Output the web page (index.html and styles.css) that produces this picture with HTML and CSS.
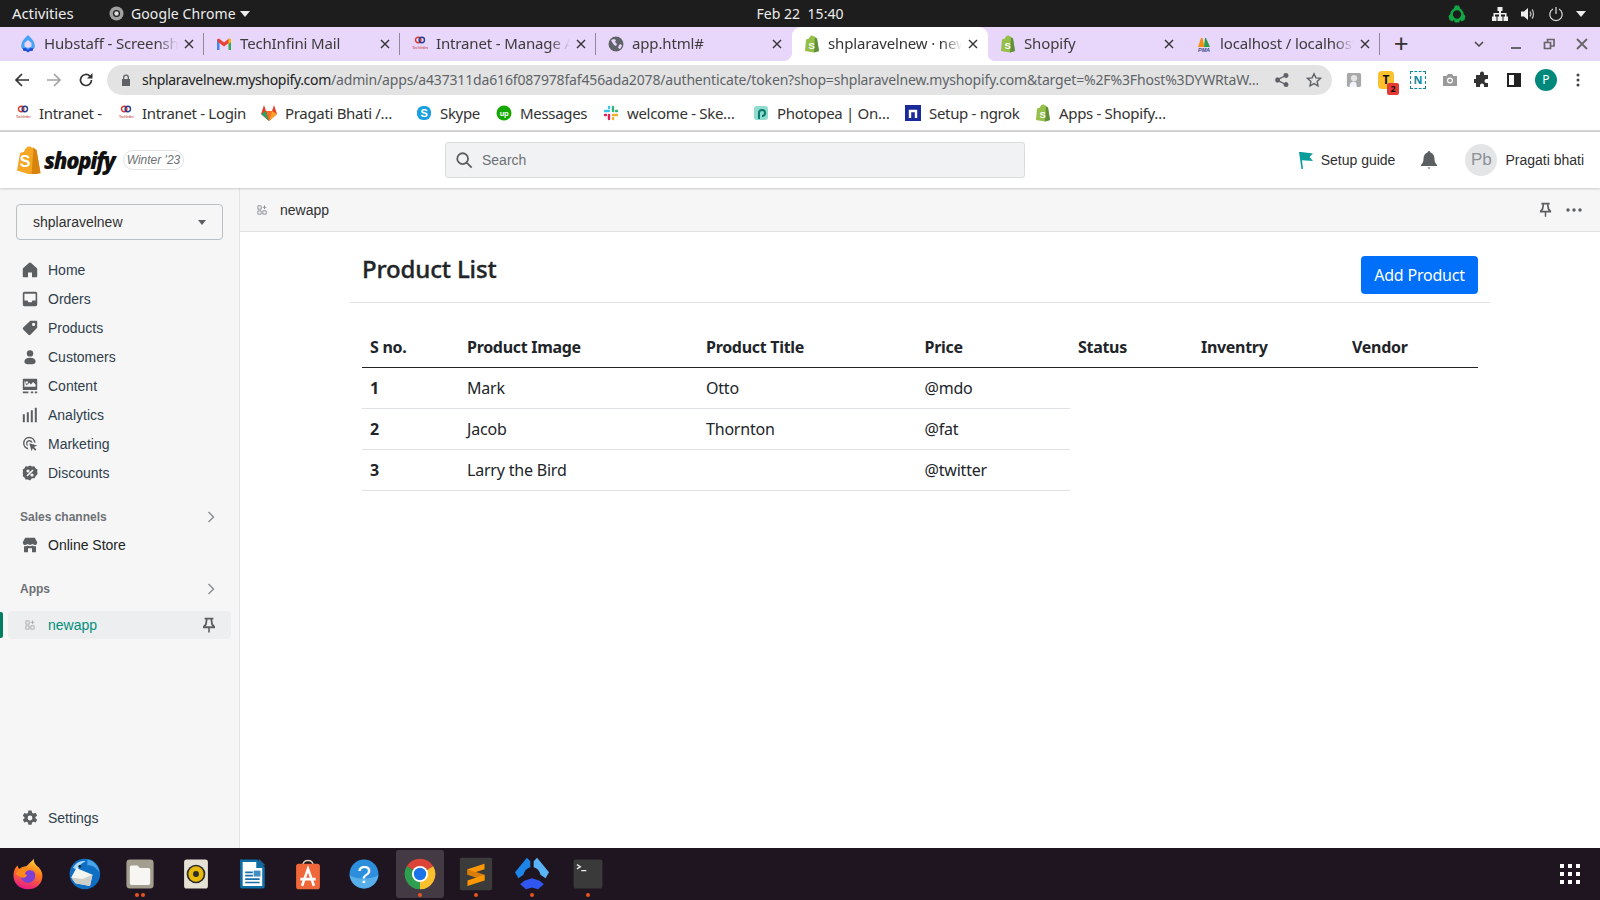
FILE: index.html
```html
<!DOCTYPE html>
<html lang="en">
<head>
<meta charset="utf-8">
<title>shplaravelnew · newapp · Shopify</title>
<link rel="stylesheet" href="styles.css">
</head>
<body>
<svg class="defs" width="0" height="0" aria-hidden="true">
  <defs>
    <linearGradient id="fx" x1="0.7" y1="0" x2="0.4" y2="1">
      <stop offset="0" stop-color="#ffd43a"/>
      <stop offset=".45" stop-color="#ff7a1a"/>
      <stop offset="1" stop-color="#e8178a"/>
    </linearGradient>
  </defs>
  <symbol id="bag" viewBox="0 0 16 18">
    <path fill="#95bf47" d="M2 4.500 5 3.400C5.600 1.600 6.800.5 8 .5c.8 0 1.200.5 1.500 1l1-.3 1 1.300L13 3.500 15 16l-5 1.500L1 16z"/>
    <path fill="#5e8e3e" d="M11 2.500 13 3.500 15 16l-5 1.500z"/>
    <text x="7.500" y="13.500" font-family="Liberation Sans" font-weight="700" font-size="9.500" fill="#fff" text-anchor="middle">S</text>
  </symbol>
  <symbol id="intra" viewBox="0 0 16 18">
    <circle cx="6.200" cy="5" r="2.700" fill="none" stroke="#d8342c" stroke-width="1.400"/>
    <circle cx="9.800" cy="5" r="2.700" fill="none" stroke="#23408e" stroke-width="1.400"/>
    <text x="8" y="14" font-family="Liberation Sans" font-size="4.200" fill="#c8423c" text-anchor="middle">TechInfini</text>
  </symbol>
  <symbol id="pin" viewBox="0 0 20 20">
    <path fill="#5c5f62" d="M4.500 1h11v2.200H14l1 5.600 2.500 2.700V14H11v5.500H9V14H2.500v-2.500L5 8.800l1-5.600H4.500zM8.200 3.200l-1 6.500-1.300 1.800h8.200l-1.300-1.800-1-6.500z"/>
  </symbol>
  <symbol id="appgrid" viewBox="0 0 12 12">
    <path fill="none" stroke="#8c9196" stroke-width="1.100" d="M1 1h4v4H1zM1 7h4v4H1zM7 7h4v4H7zM9 .5v4.500M6.800 2.800h4.400"/>
  </symbol>
  <symbol id="chev" viewBox="0 0 10 14">
    <path fill="none" stroke="#8c9196" stroke-width="1.500" d="M2.500 2 7.500 7l-5 5"/>
  </symbol>
  <symbol id="closex" viewBox="0 0 10 10">
    <path fill="none" stroke="#333" stroke-width="1.400" d="m1 1 8 8M9 1 1 9"/>
  </symbol>
</svg>

<header class="system-bar">
  <div class="sys-left">
    <span class="sys-activities">Activities</span>
    <span class="sys-app">
      <svg class="sys-chrome" viewBox="0 0 16 16"><circle cx="8" cy="8" r="7.500" fill="#a0a0a0"/><circle cx="8" cy="8" r="3.800" fill="#1d1d1d"/><circle cx="8" cy="8" r="2.400" fill="#ddd"/></svg>
      Google Chrome
      <i class="caret-white"></i>
    </span>
  </div>
  <div class="sys-clock">Feb 22&nbsp;&nbsp;15:40</div>
  <div class="sys-right">
    <svg class="sys-ic sys-green" viewBox="0 0 18 18"><circle cx="9" cy="9.500" r="5.500" fill="none" stroke="#12a644" stroke-width="2.600"/><path fill="#12a644" d="M7 .5h4l1.500 4h-7zM.5 11l2.500-2.500 3.500 4.500-2 3.500-3-1.500zM17.500 11 15 8.500 11.500 13l2 3.500 3-1.500zM6 15.500h6l-1 2H7z"/></svg>
    <svg class="sys-ic" viewBox="0 0 16 16"><path fill="#eee" d="M5.500 1h5v4H9v2h5.500v3.500H16V15h-4.500v-4.500H13V8.500H9v2h1.500V15h-5v-4.500H7v-2H3v2h1.500V15H0v-4.500h1.500V7H7V5H5.500z"/></svg>
    <svg class="sys-ic" viewBox="0 0 16 16"><path fill="#eee" d="M1 5.500h3L8 2v12l-4-3.500H1z"/><path fill="none" stroke="#bbb" stroke-width="1.300" d="M10 5.500c1 1.500 1 3.500 0 5M12 3.500c2 2.500 2 6.500 0 9"/></svg>
    <svg class="sys-ic" viewBox="0 0 16 16"><path fill="none" stroke="#ddd" stroke-width="1.200" d="M8 1v7M5 3a6.200 6.200 0 1 0 6 0"/></svg>
    <i class="caret-white"></i>
  </div>
</header>

<nav class="tab-strip">
  <div class="tab">
    <svg class="tab-ic" viewBox="0 0 16 18"><path fill="#45a2f5" d="M8 0l3 3 3 4 1 5-2 2H3l-2-2 1-5 3-4z"/><path fill="#e9d6fb" d="M8 5l3.500 3v3.500L8 13l-3.500-1.500V8z"/><path fill="#1e50d8" d="M2.500 13h3L8 14.500l2.500-1.500h3l-1 3H10l-2 1.500L6 16H3.500z"/></svg>
    <span class="tab-title">Hubstaff - Screenshots</span>
    <svg class="tab-x"><use href="#closex"/></svg>
  </div>
  <div class="tab">
    <svg class="tab-ic" viewBox="0 0 16 16"><path fill="#4285f4" d="M1 3.500h2.500V14H1z"/><path fill="#34a853" d="M12.500 3.500H15V14h-2.500z"/><path fill="#ea4335" d="M1 3.500 3 2.500l5 4 5-4 2 1-1 2.500-6 4.500L2 6z"/><path fill="#fbbc04" d="M13 2.500l2 1V6l-2.500 2V3z"/></svg>
    <span class="tab-title">TechInfini Mail</span>
    <svg class="tab-x"><use href="#closex"/></svg>
  </div>
  <div class="tab">
    <svg class="tab-ic"><use href="#intra"/></svg>
    <span class="tab-title">Intranet - Manage Attendance</span>
    <svg class="tab-x"><use href="#closex"/></svg>
  </div>
  <div class="tab">
    <svg class="tab-ic" viewBox="0 0 16 16"><circle cx="8" cy="8" r="7.500" fill="#5f6368"/><path fill="#e9d6fb" d="M3 4l3-1 2 1-1 2 2 2-1 2-2-1-2-3zM11 9l2-1 1 2-2 3-2-1z"/></svg>
    <span class="tab-title">app.html#</span>
    <svg class="tab-x"><use href="#closex"/></svg>
  </div>
  <div class="tab tab-active">
    <svg class="tab-ic"><use href="#bag"/></svg>
    <span class="tab-title">shplaravelnew · newapp · Shopify</span>
    <svg class="tab-x"><use href="#closex"/></svg>
  </div>
  <div class="tab">
    <svg class="tab-ic"><use href="#bag"/></svg>
    <span class="tab-title">Shopify</span>
    <svg class="tab-x"><use href="#closex"/></svg>
  </div>
  <div class="tab">
    <svg class="tab-ic" viewBox="0 0 16 16"><path fill="#f29111" d="M5 2h1.500l2 9H2z"/><path fill="#2c9e4b" d="M9 2h1l4 9H8z"/><text x="8" y="15.500" font-family="Liberation Sans" font-weight="700" font-style="italic" font-size="5.500" fill="#3e4f8a" text-anchor="middle">PMA</text></svg>
    <span class="tab-title">localhost / localhost | phpMyAdmin</span>
    <svg class="tab-x"><use href="#closex"/></svg>
  </div>
  <span class="tab-plus">+</span>
  <div class="win-controls">
    <svg class="win-ic win-chevron" viewBox="0 0 12 12"><path fill="none" stroke="#444" stroke-width="1.500" d="m2 4 4 4 4-4"/></svg>
    <svg class="win-ic" viewBox="0 0 12 12"><path fill="none" stroke="#666" stroke-width="2" d="M1 10h10"/></svg>
    <svg class="win-ic" viewBox="0 0 12 12"><path fill="none" stroke="#666" stroke-width="1.700" d="M1.500 4.500h6v6h-6zM4.500 4V1.500h6.500V8H8"/></svg>
    <svg class="win-ic" viewBox="0 0 12 12"><path fill="none" stroke="#666" stroke-width="1.800" d="m1 1 10 10M11 1 1 11"/></svg>
  </div>
</nav>

<div class="toolbar">
  <svg class="tb-ic" viewBox="0 0 16 16"><path fill="none" stroke="#333" stroke-width="1.700" d="M15 8H2M8 2 2 8l6 6"/></svg>
  <svg class="tb-ic" viewBox="0 0 16 16"><path fill="none" stroke="#a3a3a3" stroke-width="1.700" d="M1 8h13M8 2l6 6-6 6"/></svg>
  <svg class="tb-ic" viewBox="0 0 16 16"><path fill="none" stroke="#333" stroke-width="1.700" d="M13.500 8a5.500 5.500 0 1 1-1.600-3.900"/><path fill="#333" d="M14.500 1v5.500H9z"/></svg>
  <div class="omnibox">
    <svg class="omni-lock" viewBox="0 0 10 12"><path fill="#5f6368" d="M2 5V3.500a3 3 0 0 1 6 0V5h1v7H1V5zm1.300 0h3.400V3.500a1.700 1.700 0 0 0-3.400 0z"/></svg>
    <div class="omni-url"><span class="url-host">shplaravelnew.myshopify.com</span>/admin/apps/a437311da616f087978faf456ada2078/authenticate/token?shop=shplaravelnew.myshopify.com&amp;target=%2F%3Fhost%3DYWRtaW…</div>
    <svg class="omni-ic" viewBox="0 0 16 16"><path fill="#5f6368" d="M12 1a2.500 2.500 0 1 1-1.900 4.100L5.900 7.300a2.500 2.500 0 0 1 0 1.400l4.200 2.200a2.500 2.500 0 1 1-.6 1.200L5.200 9.900a2.500 2.500 0 1 1 0-3.800l4.300-2.200A2.500 2.500 0 0 1 12 1z"/></svg>
    <svg class="omni-ic" viewBox="0 0 16 16"><path fill="none" stroke="#5f6368" stroke-width="1.400" d="m8 1.800 1.900 4.100 4.500.5-3.300 3 .9 4.500-4-2.300-4 2.300.9-4.500-3.300-3 4.500-.5z"/></svg>
  </div>
  <div class="extensions">
    <svg class="ext" viewBox="0 0 18 18"><rect x="1" y="1" width="16" height="16" rx="2" fill="#a8a8a8"/><circle cx="9" cy="7" r="3.500" fill="#e4e4e4"/><path fill="#f1f4fa" d="M4 17c0-5 2-6 5-6s3 3 3 6z"/></svg>
    <span class="ext ext-t">T<b class="ext-badge">2</b></span>
    <span class="ext ext-n">N</span>
    <svg class="ext" viewBox="0 0 16 16"><path fill="#9a9a9a" d="M1 4h3.500L6 2h4l1.500 2H15v10H1z"/><circle cx="8" cy="8.500" r="3" fill="#fff"/><circle cx="8" cy="8.500" r="1.800" fill="#9a9a9a"/></svg>
    <svg class="ext" viewBox="0 0 16 16"><path fill="#333" d="M6 1.500a2 2 0 0 1 4 0V3h4v4h-1.500a2 2 0 0 0 0 4H14v4h-4v-1.500a2 2 0 0 0-4 0V15H2v-4H.5a2 2 0 0 1 0-4H2V3h4z"/></svg>
    <svg class="ext" viewBox="0 0 16 16"><path fill="#222" fill-rule="evenodd" d="M1 1h14v14H1zM3 3v10h5V3z"/></svg>
    <span class="ext-avatar">P</span>
    <svg class="ext" viewBox="0 0 16 16"><circle cx="8" cy="3" r="1.500" fill="#444"/><circle cx="8" cy="8" r="1.500" fill="#444"/><circle cx="8" cy="13" r="1.500" fill="#444"/></svg>
  </div>
</div>

<div class="bookmarks">
  <span class="bm"><svg class="bm-ic"><use href="#intra"/></svg>Intranet -</span>
  <span class="bm"><svg class="bm-ic"><use href="#intra"/></svg>Intranet - Login</span>
  <span class="bm"><svg class="bm-ic" viewBox="0 0 16 18"><path fill="#e24329" d="M3 1l2 6h6l2-6 3 9-8 7-8-7z"/><path fill="#fc6d26" d="M5 7h6l-3 10z"/><path fill="#3d9a5f" d="M0 10l5-3 3 10z"/><path fill="#fca326" d="M16 10l-5-3-3 10z"/></svg>Pragati Bhati /…</span>
  <span class="bm"><svg class="bm-ic" viewBox="0 0 16 16"><rect x="1" y="1" width="14" height="14" rx="6" fill="#1a9fe0"/><text x="8" y="12" font-family="Liberation Sans" font-weight="700" font-size="11" fill="#fff" text-anchor="middle">S</text></svg>Skype</span>
  <span class="bm"><svg class="bm-ic" viewBox="0 0 16 16"><circle cx="8" cy="8" r="7.500" fill="#14a800"/><text x="8" y="10.500" font-family="Liberation Sans" font-weight="700" font-size="7.500" fill="#fff" text-anchor="middle">up</text></svg>Messages</span>
  <span class="bm"><svg class="bm-ic" viewBox="0 0 16 16"><path stroke-width="2.400" stroke-linecap="round" fill="none" stroke="#36c5f0" d="M2 6h4"/><path stroke-width="2.400" stroke-linecap="round" fill="none" stroke="#2eb67d" d="M10 2v4"/><path stroke-width="2.400" stroke-linecap="round" fill="none" stroke="#ecb22e" d="M10 10h4"/><path stroke-width="2.400" stroke-linecap="round" fill="none" stroke="#e01e5a" d="M6 10v4"/><path stroke-width="2.400" stroke-linecap="round" fill="none" stroke="#e01e5a" d="M2 10h1"/><path stroke-width="2.400" stroke-linecap="round" fill="none" stroke="#36c5f0" d="M6 2v1"/><path stroke-width="2.400" stroke-linecap="round" fill="none" stroke="#2eb67d" d="M14 6h-1"/><path stroke-width="2.400" stroke-linecap="round" fill="none" stroke="#ecb22e" d="M10 14v-1"/></svg>welcome - Ske…</span>
  <span class="bm"><svg class="bm-ic" viewBox="0 0 16 16"><rect x="1" y="1" width="14" height="14" rx="3" fill="#8fdccf"/><path fill="none" stroke="#0b7a6c" stroke-width="2" d="M6 14V8a3 3 0 1 1 3 3"/></svg>Photopea | On…</span>
  <span class="bm"><svg class="bm-ic" viewBox="0 0 16 16"><rect width="16" height="16" fill="#1a2a9a" y="0"/><path fill="none" stroke="#fff" stroke-width="2.400" d="M5 13V6h6v7"/></svg>Setup - ngrok</span>
  <span class="bm"><svg class="bm-ic"><use href="#bag"/></svg>Apps - Shopify…</span>
</div>

<div class="shop-top">
  <div class="logo">
    <svg class="logo-bag" viewBox="0 0 26 28"><path fill="#f5a623" d="M1 24.500 4 7l4-1.300C9 2.500 11 .5 13.500.5c1.200 0 2 .5 2.500 1.500l1.500-.4 2 2 1 .5 4 23-9 1.900z"/><path fill="#d9830f" d="M17.500 1.600l1.900 2 1.100.5 4 23-9 1.900z"/><text x="9" y="21" font-family="Liberation Sans" font-weight="700" font-size="16" fill="#fff" text-anchor="middle">S</text></svg>
    <span class="logo-word">shopify</span>
    <span class="logo-season">Winter '23</span>
  </div>
  <div class="search">
    <svg class="search-ic" viewBox="0 0 20 20"><path fill="none" stroke="#5c5f62" stroke-width="2" d="M8.500 2.500a6 6 0 1 0 0 12 6 6 0 0 0 0-12zM13 13l5.500 5.500"/></svg>
    <span>Search</span>
  </div>
  <div class="top-actions">
    <span class="setup">
      <svg class="setup-flag" viewBox="0 0 14 17"><path fill="#0b9c9c" d="M0 0h2l12 1.500L10.500 5 14 9l-11-.7L4 17H2.500z"/></svg>
      Setup guide
    </span>
    <svg class="bell" viewBox="0 0 18 20"><path fill="#5c5f62" d="M9 1a1.200 1.200 0 0 1 1.200 1.200C13 3 14.500 5.500 14.500 9c0 3 1 4.500 2.500 6v1H1v-1c1.500-1.500 2.500-3 2.500-6 0-3.500 1.500-6 4.300-6.800A1.200 1.200 0 0 1 9 1zM7.500 17.500h3L9 19z"/></svg>
    <span class="avatar">Pb</span>
    <span class="user">Pragati bhati</span>
  </div>
</div>

<div class="workspace">
  <aside class="sidebar">
    <div class="store-select">shplaravelnew<i class="caret-dark"></i></div>
    <ul class="nav">
      <li class="nav-item"><svg class="nav-ic" viewBox="0 0 20 20"><path d="M18.700 7.800 11 1a1.500 1.500 0 0 0-2 0L1.300 7.800a1 1 0 0 0-.3.700V18a1 1 0 0 0 1 1h5.500v-6h5v6H18a1 1 0 0 0 1-1V8.500a1 1 0 0 0-.3-.7z"/></svg>Home</li>
      <li class="nav-item"><svg class="nav-ic" viewBox="0 0 20 20"><path fill-rule="evenodd" d="M3 1h14a2 2 0 0 1 2 2v14a2 2 0 0 1-2 2H3a2 2 0 0 1-2-2V3a2 2 0 0 1 2-2zm0 2.500V12h4l1 2h4l1-2h4V3.500z"/></svg>Orders</li>
      <li class="nav-item"><svg class="nav-ic" viewBox="0 0 20 20"><path fill-rule="evenodd" d="M18 1h-7.600L1.500 9.500a1.700 1.700 0 0 0 0 2.400l6.600 6.600a1.700 1.700 0 0 0 2.400 0L19 9.600V2a1 1 0 0 0-1-1zm-3.500 6.500a2 2 0 1 1 0-4 2 2 0 0 1 0 4z"/></svg>Products</li>
      <li class="nav-item"><svg class="nav-ic" viewBox="0 0 20 20"><circle cx="10" cy="5.500" r="4"/><path d="M10 11c-4.500 0-7 1.800-7 4.500C3 18 5 19 10 19s7-1 7-3.500c0-2.700-2.500-4.500-7-4.500z"/></svg>Customers</li>
      <li class="nav-item"><svg class="nav-ic" viewBox="0 0 20 20"><path fill-rule="evenodd" d="M2 1h16a1 1 0 0 1 1 1v12a1 1 0 0 1-1 1H2a1 1 0 0 1-1-1V2a1 1 0 0 1 1-1zm1 2v8h14V8l-3-3-3 3-2-2-3 3-1-1zM6 4a1.500 1.500 0 1 0 0 3 1.500 1.500 0 0 0 0-3zM1 17h7v2H1zm10 0h3v2h-3zm5 0h3v2h-3z"/></svg>Content</li>
      <li class="nav-item"><svg class="nav-ic" viewBox="0 0 20 20"><path d="M1 9h2.500v10H1zM6 6.500h2.500V19H6zM11 4h2.500v15H11zM16 1h2.500v18H16z"/></svg>Analytics</li>
      <li class="nav-item"><svg class="nav-ic" viewBox="0 0 20 20"><path d="M9 1a8 8 0 0 0-1 15.900l-.6-2.200A6 6 0 1 1 15 8l2 .5A8 8 0 0 0 9 1z"/><path d="M9 5a4 4 0 0 0-1.500 7.700l-.4-1.900A2.300 2.300 0 1 1 11.300 8l1.800.5A4 4 0 0 0 9 5z"/><path d="M9 9l10 3-4 1.800 3 3-1.500 1.500-3-3L12 19z"/></svg>Marketing</li>
      <li class="nav-item"><svg class="nav-ic" viewBox="0 0 20 20"><path fill-rule="evenodd" d="M10 .5l2.500 1.500 3-.3 1.300 2.500 2.500 1.500-.3 3 .5 1.300-.5 2-2 2.200-1.500 2.500-3-.2L10 19.500l-2.500-1.500-3 .2-1.300-2.500L1 14.200l.3-3L.7 10l.6-1.300-.3-3 2.200-1.500 1.300-2.500 3 .3zM13 5.500 5.500 13l1.500 1.500L14.500 7zM7.500 5.500a2 2 0 1 0 0 4 2 2 0 0 0 0-4zm5 5a2 2 0 1 0 0 4 2 2 0 0 0 0-4z"/></svg>Discounts</li>
    </ul>
    <div class="nav-head">Sales channels<svg class="nav-chev"><use href="#chev"/></svg></div>
    <div class="nav-item nav-item-store"><svg class="nav-ic" viewBox="0 0 20 20"><path fill-rule="evenodd" d="M4 1h12l3 5.500C19 9 17.500 10 16 10c-1.200 0-2.300-.6-3-1.500-.7.900-1.800 1.500-3 1.500s-2.300-.6-3-1.500C6.300 9.400 5.200 10 4 10 2.500 10 1 9 1 6.500zM2.500 11.500c.5.100 1 .2 1.500.2 1 0 2.100-.3 3-1 .9.700 2 1 3 1s2.100-.3 3-1c.9.700 2 1 3 1 .5 0 1-.1 1.500-.2V19h-5v-5H7.500v5h-5z"/></svg>Online Store</div>
    <div class="nav-head">Apps<svg class="nav-chev"><use href="#chev"/></svg></div>
    <div class="nav-app">
      <svg class="nav-app-ic"><use href="#appgrid"/></svg>
      <span class="nav-app-name">newapp</span>
      <svg class="nav-app-pin"><use href="#pin"/></svg>
    </div>
    <div class="nav-item nav-settings"><svg class="nav-ic" viewBox="0 0 20 20"><path fill-rule="evenodd" d="M8 .5h4l.6 2.900 1.600.9 2.800-.9 2 3.400-2.200 2v1.400l2.200 2-2 3.400-2.800-.9-1.600.9-.6 2.900H8l-.6-2.900-1.600-.9-2.800.9-2-3.400 2.200-2V9.300L1 7.300l2-3.400 2.800.9 1.600-.9zM10 7a3 3 0 1 0 0 6 3 3 0 0 0 0-6z"/></svg>Settings</div>
  </aside>

  <main class="main">
    <div class="app-bar">
      <svg class="app-bar-ic"><use href="#appgrid"/></svg>
      <span class="app-bar-name">newapp</span>
      <svg class="app-bar-pin"><use href="#pin"/></svg>
      <svg class="app-bar-more" viewBox="0 0 16 4"><circle cx="2" cy="2" r="1.700" fill="#5c5f62"/><circle cx="8" cy="2" r="1.700" fill="#5c5f62"/><circle cx="14" cy="2" r="1.700" fill="#5c5f62"/></svg>
    </div>
    <div class="container">
      <div class="page-head">
        <h2 class="page-title">Product List</h2>
        <button class="btn-add">Add Product</button>
      </div>
      <table class="products">
        <colgroup>
          <col class="c1"><col class="c2"><col class="c3"><col class="c4"><col class="c5"><col class="c6"><col class="c7">
        </colgroup>
        <thead>
          <tr><th>S no.</th><th>Product Image</th><th>Product Title</th><th>Price</th><th>Status</th><th>Inventry</th><th>Vendor</th></tr>
        </thead>
        <tbody>
          <tr><th>1</th><td>Mark</td><td>Otto</td><td>@mdo</td></tr>
          <tr><th>2</th><td>Jacob</td><td>Thornton</td><td>@fat</td></tr>
          <tr><th>3</th><td>Larry the Bird</td><td></td><td>@twitter</td></tr>
        </tbody>
      </table>
    </div>
  </main>
</div>

<footer class="dock">
  <div class="dock-item"><svg viewBox="0 0 40 40"><path fill="url(#fx)" d="M20 38C9 38 2 30 3 20c.4-4 2-8 5-10 0 2 .5 3 2 4 2-2 5-3 8-3 2-2 5-5 9-9-.5 3 .5 5 3 8 4 3 7 7 7 12 0 10-8 16-17 16z"/><circle cx="20" cy="22" r="8.500" fill="#7b3fd6"/><path fill="#ff8a1a" d="M6 20c2-6 9-9 15-7 3 1 5 2 6 4-4-2-8-2-10 1-1 2 0 3 2 3-1 3-4 4-6 3-3-1-5-2-7-4z"/></svg></div>
  <div class="dock-item"><svg viewBox="0 0 40 40"><circle cx="21" cy="20" r="18" fill="#0f6fc4"/><path fill="#4aa6ea" d="M24 3c7 1 13 7 14 15-4-6-9-9-14-8z"/><path fill="#a9d8f8" d="M7 13c3-6 9-9 15-8-5 2-8 5-9 10z"/><path fill="#f5f5f0" d="M5 24l6-11 19 8-3 13-17-3z"/><path fill="#cfcfc8" d="M5 24l13 2 12-5-3 13-17-3z"/><circle cx="15" cy="11" r="1.600" fill="#123"/></svg></div>
  <div class="dock-item dock-files"><svg viewBox="0 0 40 40"><rect x="4" y="3" width="32" height="34" rx="4" fill="#a39e8e"/><path fill="#f7f6f2" d="M8 12a2 2 0 0 1 2-2h7l3 3h10a2 2 0 0 1 2 2v16a2 2 0 0 1-2 2H10a2 2 0 0 1-2-2z"/></svg><i class="run-dot"></i><i class="run-dot"></i></div>
  <div class="dock-item"><svg viewBox="0 0 40 40"><rect x="6" y="3" width="28" height="34" rx="3" fill="#e5e1d5"/><circle cx="20" cy="20" r="11" fill="#2b2b2b"/><circle cx="20" cy="20" r="9" fill="#e8b90c"/><circle cx="20" cy="20" r="3.500" fill="#2b2b2b"/></svg></div>
  <div class="dock-item"><svg viewBox="0 0 40 40"><path fill="#0f6fa6" d="M6 3h20l9 9v23a2 2 0 0 1-2 2H8a2 2 0 0 1-2-2z"/><path fill="#fff" d="M9 6h16v7h7v21H9z"/><path fill="#17659b" d="M28 2l8 8h-8z"/><path fill="#1a6ea8" d="M12 17h9v2h-9zm0 4h9v2h-9zm0 4h17v2H12zm0 4h17v2H12z"/><rect x="22" y="16" width="8" height="7" fill="#3f8fc4"/></svg></div>
  <div class="dock-item"><svg viewBox="0 0 40 40"><path fill="none" stroke="#e8d0b8" stroke-width="1.800" d="M14 10c0-8 12-8 12 0"/><rect x="6" y="8" width="28" height="30" rx="3" fill="#f0673a"/><path fill="none" stroke="#fff" stroke-width="3" d="M13 34 20 14l7 20M11 26h18"/></svg></div>
  <div class="dock-item"><svg viewBox="0 0 40 40"><circle cx="20" cy="20" r="17" fill="#2d8fdc"/><path fill="#58aee8" d="M3 21c5 6 28 6 34 0-1 9-8 16-17 16S4 30 3 21z"/><text x="20" y="30" font-family="Liberation Sans" font-size="29" fill="#fff" text-anchor="middle">?</text></svg></div>
  <div class="dock-item dock-active"><svg viewBox="0 0 40 40"><path fill="#db4437" d="M20 20 4.400 11A18 18 0 0 1 35.600 11z"/><path fill="#fbc02d" d="M20 20 35.600 11A18 18 0 0 1 20 38z"/><path fill="#2e9e4f" d="M20 20 20 38A18 18 0 0 1 4.400 11z"/><circle cx="20" cy="20" r="9.500" fill="#fff"/><circle cx="20" cy="20" r="7.300" fill="#1a73e8"/></svg><i class="run-dot"></i></div>
  <div class="dock-item"><svg viewBox="0 0 40 40"><rect x="1" y="1" width="38" height="38" rx="2" fill="#3c3b3b"/><path fill="#ff9800" d="M30 8v6.500L10 21v-6.500z"/><path fill="#d97f08" d="M10 14.500v6.500l20 6.500V21z"/><path fill="#ff9800" d="M30 21v6.500L10 34v-6.500z"/></svg><i class="run-dot"></i></div>
  <div class="dock-item"><svg viewBox="0 0 40 40"><path fill="#1d84e8" d="M14 1l4 4v7c-4 1-7 4-8 9l-6 4-4-7z"/><path fill="#5ab2f7" d="M26 1l-4 4v7c4 1 7 4 8 9l6 4 4-7z"/><path fill="#2f56f0" d="M11 28l9-3 9 3 5 4-7 6-7-2-7 2-7-6z"/></svg><i class="run-dot"></i></div>
  <div class="dock-item"><svg viewBox="0 0 40 40"><rect x="3" y="3" width="34" height="34" rx="3" fill="#3a3a3a"/><path fill="none" stroke="#eee" stroke-width="1.500" d="M7 9l4 2.500L7 14M12 16h6"/></svg><i class="run-dot"></i></div>
  <svg class="dock-grid" viewBox="0 0 20 20"><g fill="#fff"><rect width="4" height="4"/><rect x="8" width="4" height="4"/><rect x="16" width="4" height="4"/><rect y="8" width="4" height="4"/><rect x="8" y="8" width="4" height="4"/><rect x="16" y="8" width="4" height="4"/><rect y="16" width="4" height="4"/><rect x="8" y="16" width="4" height="4"/><rect x="16" y="16" width="4" height="4"/></g></svg>
</footer>
</body>
</html>
```

FILE: styles.css
```css
* { box-sizing: border-box; }
html, body { margin: 0; height: 900px; overflow: hidden; }
body {
  display: flex;
  flex-direction: column;
  width: 1600px;
  background: #fff;
  font-family: "Liberation Sans", Arial, sans-serif;
  color: #202223;
}
.defs { position: absolute; }
svg { display: block; flex: none; }

/* system bar */
.system-bar {
  height: 27px;
  background: #1d1d1d;
  color: #ececec;
  display: grid;
  grid-template-columns: 1fr auto 1fr;
  align-items: center;
  font: 14px/27px "Noto Sans", sans-serif;
  flex: none;
}
.sys-left { display: flex; align-items: center; padding-left: 12px; }
.sys-activities { width: 97px; font-size: 15px; letter-spacing: -.1px; }
.sys-app { display: flex; align-items: center; gap: 7px; letter-spacing: .1px; }
.sys-chrome { width: 15px; height: 15px; }
.caret-white { display: block; width: 0; height: 0; border: 5px solid transparent; border-top: 6px solid #ececec; border-bottom: 0; }
.sys-app .caret-white { margin-left: -3px; }
.sys-clock { letter-spacing: .05px; }
.sys-right { display: flex; align-items: center; justify-content: flex-end; padding-right: 14px; }
.sys-ic { width: 16px; height: 16px; margin-right: 12px; }
.sys-green { width: 18px; height: 18px; margin-right: 26px; }

/* tabs */
.tab-strip {
  height: 34px;
  flex: none;
  background: #e9d6fb;
  display: flex;
  padding-left: 8px;
  font: 15px/20px "Noto Sans", sans-serif;
  letter-spacing: -.15px;
  color: #3c3c3c;
}
.tab {
  width: 196px;
  height: 34px;
  display: flex;
  align-items: center;
  padding: 0 9px 0 12px;
  position: relative;
  border-right: 1px solid #8f8a96;
  background-clip: padding-box;
  border-image: linear-gradient(transparent 7px, #8f8a96 7px, #8f8a96 27px, transparent 27px) 1;
}
.tab:nth-child(4), .tab:nth-child(5), .tab:nth-child(6) { border-image: none; border-right-color: transparent; }
.tab-active {
  background: #fff;
  border-radius: 9px 9px 0 0;
  color: #333;
}
.tab-active::before, .tab-active::after {
  content: "";
  position: absolute;
  bottom: 0;
  width: 9px;
  height: 9px;
}
.tab-active::before { left: -9px; background: radial-gradient(circle at 0 0, transparent 9px, #fff 9.5px); }
.tab-active::after { right: -9px; background: radial-gradient(circle at 100% 0, transparent 9px, #fff 9.5px); }
.tab-ic { width: 16px; height: 18px; }
.tab-title {
  margin: -2px 0 0 8px;
  flex: 1;
  min-width: 0;
  white-space: nowrap;
  overflow: hidden;
  -webkit-mask-image: linear-gradient(90deg, #000 85%, transparent 100%);
  mask-image: linear-gradient(90deg, #000 85%, transparent 100%);
}
.tab-x { width: 10px; height: 10px; margin-left: 6px; }
.tab-plus { width: 42px; text-align: center; font-size: 26px; font-weight: 400; color: #333; line-height: 32px; }
.win-controls { display: flex; align-items: center; margin-left: auto; padding-right: 12px; }
.win-ic { width: 12px; height: 12px; margin-left: 21px; }
.win-chevron { margin-right: 4px; }

/* toolbar */
.toolbar {
  height: 38px;
  flex: none;
  display: flex;
  align-items: center;
  padding-left: 14px;
  background: #fff;
}
.tb-ic { width: 16px; height: 16px; margin-right: 16px; }
.toolbar .tb-ic:nth-child(3) { margin-right: 13px; }
.omnibox {
  width: 1225px;
  height: 30px;
  border-radius: 15px;
  background: #e3e3e3;
  display: flex;
  align-items: center;
  padding: 0 10px 0 14px;
  font: 14px/30px "Noto Sans", sans-serif;
  letter-spacing: -.16px;
  color: #5f6368;
}
.omni-lock { width: 10px; height: 12px; margin-right: 11px; }
.omni-url { flex: 1; min-width: 0; white-space: nowrap; overflow: hidden; }
.url-host { color: #222; letter-spacing: -.32px; }
.omni-ic { width: 16px; height: 16px; margin-left: 16px; }
.extensions { display: flex; align-items: center; padding-left: 6px; }
.ext {
  width: 16px;
  height: 18px;
  margin: 0 8px;
  position: relative;
}
.ext-t {
  display: block;
  background: #fbc02d;
  border-radius: 4px;
  font: 700 12px/18px "Noto Sans", sans-serif;
  text-align: center;
  color: #111;
}
.ext-badge {
  position: absolute;
  right: -5px;
  bottom: -6px;
  width: 12px;
  height: 12px;
  background: #e53935;
  border-radius: 2px;
  font: 700 9px/12px "Noto Sans", sans-serif;
  color: #111;
}
.ext-n {
  display: block;
  border: 1px dashed #0f8c9c;
  font: 700 11px/16px "Noto Sans", sans-serif;
  text-align: center;
  color: #0f8c9c;
}
.ext-avatar {
  width: 22px;
  height: 22px;
  margin: 0 5px;
  border-radius: 50%;
  background: #00897b;
  color: #fff;
  font: 12px/22px "Noto Sans", sans-serif;
  text-align: center;
}

/* bookmarks */
.bookmarks {
  height: 33px;
  flex: none;
  display: grid;
  grid-template-columns: 103px 143px 155px 80px 107px 150px 152px 130px 1fr;
  padding: 0 0 4px 15px;
  align-items: center;
  border-bottom: 2px solid #d3d3d3;
  font: 15px/22px "Noto Sans", sans-serif;
  letter-spacing: -.32px;
  color: #333;
}
.bm { display: flex; align-items: center; white-space: nowrap; }
.bm-ic { width: 16px; height: 18px; margin-right: 8px; }

/* shopify top bar */
.shop-top {
  height: 56px;
  flex: none;
  display: flex;
  align-items: center;
  background: #fff;
  box-shadow: 0 1px 2px rgba(0,0,0,.18);
  position: relative;
  z-index: 2;
}
.logo { width: 445px; display: flex; align-items: center; padding-left: 16px; }
.logo-bag { width: 26px; height: 28px; }
.logo-word {
  margin: -1px 0 0 2px;
  width: 79px;
  font: italic 800 22px/30px "Open Sans", sans-serif;
  letter-spacing: -1.3px;
  color: #111;
}
.logo-season {
  width: 61px;
  height: 20px;
  border: 1px solid #e1e3e5;
  border-radius: 10px;
  font: italic 12px/18px "Liberation Sans", sans-serif;
  text-align: center;
  color: #6d7175;
}
.search {
  width: 580px;
  height: 36px;
  background: #f1f2f3;
  border: 1px solid #d9dbdd;
  border-radius: 3px;
  display: flex;
  align-items: center;
  padding-left: 9px;
  font-size: 14px;
  color: #6d7175;
}
.search-ic { width: 18px; height: 18px; margin-right: 9px; }
.top-actions { flex: 1; display: flex; align-items: center; justify-content: flex-end; padding-right: 16px; font-size: 14px; color: #303030; }
.setup { display: flex; align-items: center; gap: 8px; }
.setup-flag { width: 14px; height: 17px; }
.bell { width: 18px; height: 20px; margin: 0 27px 0 25px; }
.avatar {
  width: 32px;
  height: 32px;
  border-radius: 50%;
  background: #e4e5e7;
  color: #8c9196;
  font-size: 17px;
  line-height: 32px;
  text-align: center;
  margin-right: 8px;
}

/* workspace */
.workspace { flex: 1; min-height: 0; display: flex; }
.sidebar {
  width: 240px;
  flex: none;
  background: #f6f6f7;
  border-right: 1px solid #e1e3e5;
  display: flex;
  flex-direction: column;
  padding: 16px 0;
  font-size: 14px;
}
.store-select {
  width: 207px;
  height: 36px;
  margin-left: 16px;
  border: 1px solid #babfc3;
  border-radius: 4px;
  background: #f6f6f7;
  display: flex;
  align-items: center;
  justify-content: space-between;
  padding: 0 16px;
  color: #303030;
}
.caret-dark { display: block; width: 0; height: 0; border: 4px solid transparent; border-top: 5px solid #5c5f62; border-bottom: 0; }
.nav { list-style: none; margin: 15px 0 0; padding: 0; }
.nav-item {
  height: 29px;
  display: flex;
  align-items: center;
  padding-left: 22px;
  color: #303e4b;
}
.nav-ic { width: 16px; height: 16px; margin-right: 10px; fill: #5c5f62; }
.nav-head {
  height: 20px;
  margin-top: 20px;
  padding: 0 23px 0 20px;
  display: flex;
  align-items: center;
  justify-content: space-between;
  font-size: 12px;
  font-weight: 700;
  color: #6d7175;
}
.nav-chev { width: 10px; height: 14px; }
.nav-item-store { margin-top: 3px; color: #202223; }
.nav-app {
  height: 28px;
  margin: 12px 8px 0;
  background: #edeeef;
  border-radius: 4px;
  display: flex;
  align-items: center;
  padding: 0 14px 0 17px;
  position: relative;
}
.nav-app::before {
  content: "";
  position: absolute;
  left: -8px;
  top: 1px;
  bottom: 1px;
  width: 3px;
  background: #008060;
  border-radius: 0 2px 2px 0;
}
.nav-app-ic { width: 10px; height: 10px; opacity: .7; }
.nav-app-name { flex: 1; margin-left: 13px; color: #008f7a; }
.nav-app-pin { width: 16px; height: 16px; }
.nav-settings { margin-top: auto; color: #303e4b; }

/* main */
.main { flex: 1; min-width: 0; background: #fff; }
.app-bar {
  height: 44px;
  background: #f6f6f7;
  border-bottom: 1px solid #e1e3e5;
  display: flex;
  align-items: center;
  padding: 0 18px 0 17px;
  font-size: 14px;
  color: #303030;
}
.app-bar-ic { width: 10px; height: 10px; }
.app-bar-name { flex: 1; margin-left: 13px; }
.app-bar-pin { width: 15px; height: 15px; margin-right: 13px; }
.app-bar-more { width: 16px; height: 4px; }
.container { width: 1140px; margin: 0 auto; }
.page-head {
  margin-top: 24px;
  padding: 0 12px 8px;
  border-bottom: 1px solid #dee2e6;
  display: flex;
  justify-content: space-between;
  align-items: flex-start;
}
.page-title {
  margin: 0;
  font: 500 24px/26px "Noto Sans", sans-serif;
  letter-spacing: -.15px;
  -webkit-text-stroke: .35px #212529;
  color: #212529;
}
.btn-add {
  width: 117px;
  height: 38px;
  border: 0;
  border-radius: 4px;
  background: #006ffa;
  color: #fff;
  font: 16px/38px "Noto Sans", sans-serif;
  letter-spacing: -.2px;
  padding: 0;
}
.products {
  width: 1116px;
  margin: 23px 12px 0;
  border-collapse: collapse;
  table-layout: fixed;
  font: 16px/24px "Noto Sans", sans-serif;
  letter-spacing: -.2px;
  color: #212529;
}
.c1 { width: 97px; } .c2 { width: 239px; } .c3 { width: 218.5px; } .c4 { width: 153.5px; }
.c5 { width: 123px; } .c6 { width: 151px; } .c7 { width: 134px; }
.products th, .products td { padding: 8px; text-align: left; height: 41px; border-bottom: 1px solid #dee2e6; }
.products thead th { padding: 9px 8px 7px; border-bottom: 1px solid #212529; letter-spacing: -.3px; }
.products th { font-weight: 700; }

/* dock */
.dock {
  height: 52px;
  flex: none;
  background: #1f1520;
  display: flex;
  align-items: center;
  position: relative;
}
.dock-item {
  width: 56px;
  height: 52px;
  flex: none;
  display: flex;
  align-items: center;
  justify-content: center;
  position: relative;
}
.dock-item svg { width: 34px; height: 34px; }
.dock-active::before {
  content: "";
  position: absolute;
  left: 4px;
  right: 4px;
  top: 2px;
  bottom: 2px;
  background: #443a44;
  border-radius: 3px;
}
.dock-active svg { position: relative; }
.run-dot {
  position: absolute;
  left: 26px;
  bottom: 3px;
  width: 4px;
  height: 4px;
  border-radius: 50%;
  background: #e95420;
}
.dock-files .run-dot { left: 23px; }
.dock-files .run-dot + .run-dot { left: 29px; }
.dock-grid { width: 20px; height: 20px; margin-left: auto; margin-right: 20px; }
```
